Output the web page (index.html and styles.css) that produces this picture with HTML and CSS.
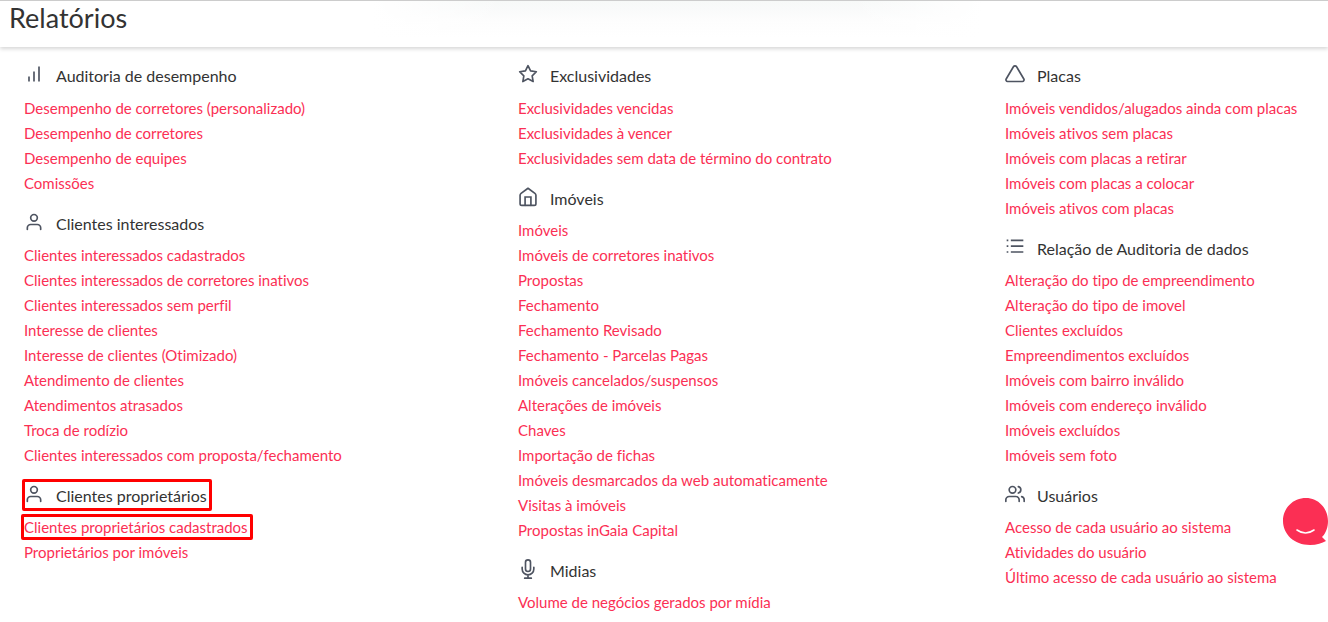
FILE: index.html
```html
<!DOCTYPE html>
<html lang="pt-BR">
<head>
<meta charset="utf-8">
<meta name="viewport" content="width=device-width, initial-scale=1">
<title>Relatórios</title>
<link rel="stylesheet" href="styles.css">
</head>
<body>
<header class="page-header"><h1 class="page-title">Relatórios</h1></header>
<main class="reports">
  <div class="column">
    <section class="group">
      <h2 class="group-title"><svg class="icon" viewBox="0 0 24 24"><path stroke-linecap="butt" d="M18 21V3M12 21V9M6 21v-6"/></svg><span>Auditoria de desempenho</span></h2>
      <ul class="links">
        <li><a href="#">Desempenho de corretores (personalizado)</a></li>
        <li><a href="#">Desempenho de corretores</a></li>
        <li><a href="#">Desempenho de equipes</a></li>
        <li><a href="#">Comissões</a></li>
      </ul>
    </section>
    <section class="group">
      <h2 class="group-title"><svg class="icon" viewBox="0 0 24 24"><path d="M20 21v-2a4 4 0 0 0-4-4H8a4 4 0 0 0-4 4v2"/><circle cx="12" cy="7" r="4"/></svg><span>Clientes interessados</span></h2>
      <ul class="links">
        <li><a href="#">Clientes interessados cadastrados</a></li>
        <li><a href="#">Clientes interessados de corretores inativos</a></li>
        <li><a href="#">Clientes interessados sem perfil</a></li>
        <li><a href="#">Interesse de clientes</a></li>
        <li><a href="#">Interesse de clientes (Otimizado)</a></li>
        <li><a href="#">Atendimento de clientes</a></li>
        <li><a href="#">Atendimentos atrasados</a></li>
        <li><a href="#">Troca de rodízio</a></li>
        <li><a href="#">Clientes interessados com proposta/fechamento</a></li>
      </ul>
    </section>
    <section class="group">
      <h2 class="group-title marked"><svg class="icon" viewBox="0 0 24 24"><path d="M20 21v-2a4 4 0 0 0-4-4H8a4 4 0 0 0-4 4v2"/><circle cx="12" cy="7" r="4"/></svg><span>Clientes proprietários</span></h2>
      <ul class="links">
        <li><a class="marked" href="#">Clientes proprietários cadastrados</a></li>
        <li><a href="#">Proprietários por imóveis</a></li>
      </ul>
    </section>
  </div>
  <div class="column">
    <section class="group">
      <h2 class="group-title"><svg class="icon" viewBox="0 0 24 24"><path d="m12 2 3.090 6.260L22 9.270l-5 4.870 1.180 6.880L12 17.770l-6.180 3.250L7 14.140 2 9.270l6.910-1.010z"/></svg><span>Exclusividades</span></h2>
      <ul class="links">
        <li><a href="#">Exclusividades vencidas</a></li>
        <li><a href="#">Exclusividades à vencer</a></li>
        <li><a href="#">Exclusividades sem data de término do contrato</a></li>
      </ul>
    </section>
    <section class="group">
      <h2 class="group-title"><svg class="icon" viewBox="0 0 24 24"><path d="M2.500 10a3 3 0 0 1 1.200-2.400L12 1.500l8.300 6.100a3 3 0 0 1 1.200 2.400v10a2 2 0 0 1-2 2h-15a2 2 0 0 1-2-2z"/><path stroke-linejoin="miter" d="M8.500 22V12h7v10"/></svg><span>Imóveis</span></h2>
      <ul class="links">
        <li><a href="#">Imóveis</a></li>
        <li><a href="#">Imóveis de corretores inativos</a></li>
        <li><a href="#">Propostas</a></li>
        <li><a href="#">Fechamento</a></li>
        <li><a href="#">Fechamento Revisado</a></li>
        <li><a href="#">Fechamento - Parcelas Pagas</a></li>
        <li><a href="#">Imóveis cancelados/suspensos</a></li>
        <li><a href="#">Alterações de imóveis</a></li>
        <li><a href="#">Chaves</a></li>
        <li><a href="#">Importação de fichas</a></li>
        <li><a href="#">Imóveis desmarcados da web automaticamente</a></li>
        <li><a href="#">Visitas à imóveis</a></li>
        <li><a href="#">Propostas inGaia Capital</a></li>
      </ul>
    </section>
    <section class="group">
      <h2 class="group-title"><svg class="icon" viewBox="0 0 24 24"><path d="M12 1a3 3 0 0 0-3 3v8a3 3 0 0 0 6 0V4a3 3 0 0 0-3-3zM19 10v2a7 7 0 0 1-14 0v-2M12 19v4M8 23h8"/></svg><span>Midias</span></h2>
      <ul class="links">
        <li><a href="#">Volume de negócios gerados por mídia</a></li>
      </ul>
    </section>
  </div>
  <div class="column">
    <section class="group">
      <h2 class="group-title"><svg class="icon" viewBox="0 0 24 24"><path d="M10.100 3.300 1.400 18a2 2 0 0 0 1.700 3h17.800a2 2 0 0 0 1.700-3L13.900 3.300a2.200 2.200 0 0 0-3.800 0z"/></svg><span>Placas</span></h2>
      <ul class="links">
        <li><a href="#">Imóveis vendidos/alugados ainda com placas</a></li>
        <li><a href="#">Imóveis ativos sem placas</a></li>
        <li><a href="#">Imóveis com placas a retirar</a></li>
        <li><a href="#">Imóveis com placas a colocar</a></li>
        <li><a href="#">Imóveis ativos com placas</a></li>
      </ul>
    </section>
    <section class="group">
      <h2 class="group-title"><svg class="icon" viewBox="0 0 24 24"><path stroke-linecap="butt" d="M7 4h15M7 11h15M7 18h15M2 4h2M2 11h2M2 18h2"/></svg><span>Relação de Auditoria de dados</span></h2>
      <ul class="links">
        <li><a href="#">Alteração do tipo de empreendimento</a></li>
        <li><a href="#">Alteração do tipo de imovel</a></li>
        <li><a href="#">Clientes excluídos</a></li>
        <li><a href="#">Empreendimentos excluídos</a></li>
        <li><a href="#">Imóveis com bairro inválido</a></li>
        <li><a href="#">Imóveis com endereço inválido</a></li>
        <li><a href="#">Imóveis excluídos</a></li>
        <li><a href="#">Imóveis sem foto</a></li>
      </ul>
    </section>
    <section class="group">
      <h2 class="group-title"><svg class="icon" viewBox="0 0 24 24"><path d="M17 21v-2a4 4 0 0 0-4-4H5a4 4 0 0 0-4 4v2M23 21v-2a4 4 0 0 0-3-3.870M16 3.130a4 4 0 0 1 0 7.750"/><circle cx="9" cy="7" r="4"/></svg><span>Usuários</span></h2>
      <ul class="links">
        <li><a href="#">Acesso de cada usuário ao sistema</a></li>
        <li><a href="#">Atividades do usuário</a></li>
        <li><a href="#">Último acesso de cada usuário ao sistema</a></li>
      </ul>
    </section>
  </div>
</main>
<button class="chat" type="button" aria-label="Chat">
  <svg viewBox="0 0 45 47"><path fill="#fb2f54" d="M23 0C10 0 0 10 0 23s11 24 27 24c7 0 12-2 16-4l-4-4c4-4 6-10 6-16C45 10 35 0 23 0z"/><path fill="none" stroke="#fff" stroke-width="1.600" stroke-linecap="round" d="M14 32q8.500 6 17 0"/></svg>
</button>
</body>
</html>
```
FILE: styles.css
```css
* { box-sizing: border-box; }
body {
  margin: 0;
  background: #fff;
  color: #333;
  font-family: Lato, sans-serif;
  font-size: 15px;
}
.page-header {
  height: 47px;
  padding: 0 9px;
  border-top: 1px solid #ccc;
  background:
    linear-gradient(90deg, #fff 28%, transparent 38%, transparent 64%, #fff 74%),
    linear-gradient(#f7f9f8, #f9fafa 8px, #fdfdfd 20px, #fff 36px);
  box-shadow: 0 2px 4px rgba(0, 0, 0, .16);
}
.page-title {
  margin: 0;
  font-size: 27px;
  font-weight: 400;
  line-height: 34px;
}
.reports {
  display: grid;
  grid-template-columns: 494fr 487fr 323fr;
  padding: 17px 0 0 24px;
}
.column {
  display: flex;
  flex-direction: column;
  gap: 16px;
}
.group {
  display: flex;
  flex-direction: column;
  align-items: flex-start;
  gap: 8px;
}
.group + .group { gap: 7px; }
.group-title {
  display: flex;
  gap: 12px;
  margin: 0;
  font-size: 16px;
  font-weight: 400;
  line-height: 24px;
}
.icon {
  width: 20px;
  height: 20px;
  overflow: visible;
  fill: none;
  stroke: #4e5461;
  stroke-width: 2;
  stroke-linecap: round;
  stroke-linejoin: round;
}
.links {
  margin: 0;
  padding: 0;
  list-style: none;
  line-height: 25px;
  font-variant-ligatures: no-common-ligatures;
}
.links a {
  color: #fb2f54;
  text-decoration: none;
}
.marked { position: relative; }
.marked::after {
  content: "";
  position: absolute;
  inset: -5px -5px -3px -2px;
  border: 3px solid #f00;
  border-radius: 2px;
}
.links .marked::after { inset: -4px -5px -4px -3px; }
.chat {
  position: fixed;
  right: 0;
  bottom: 77px;
  width: 45px;
  height: 47px;
  padding: 0;
  border: 0;
  background: none;
}
.chat svg { display: block; }
```
